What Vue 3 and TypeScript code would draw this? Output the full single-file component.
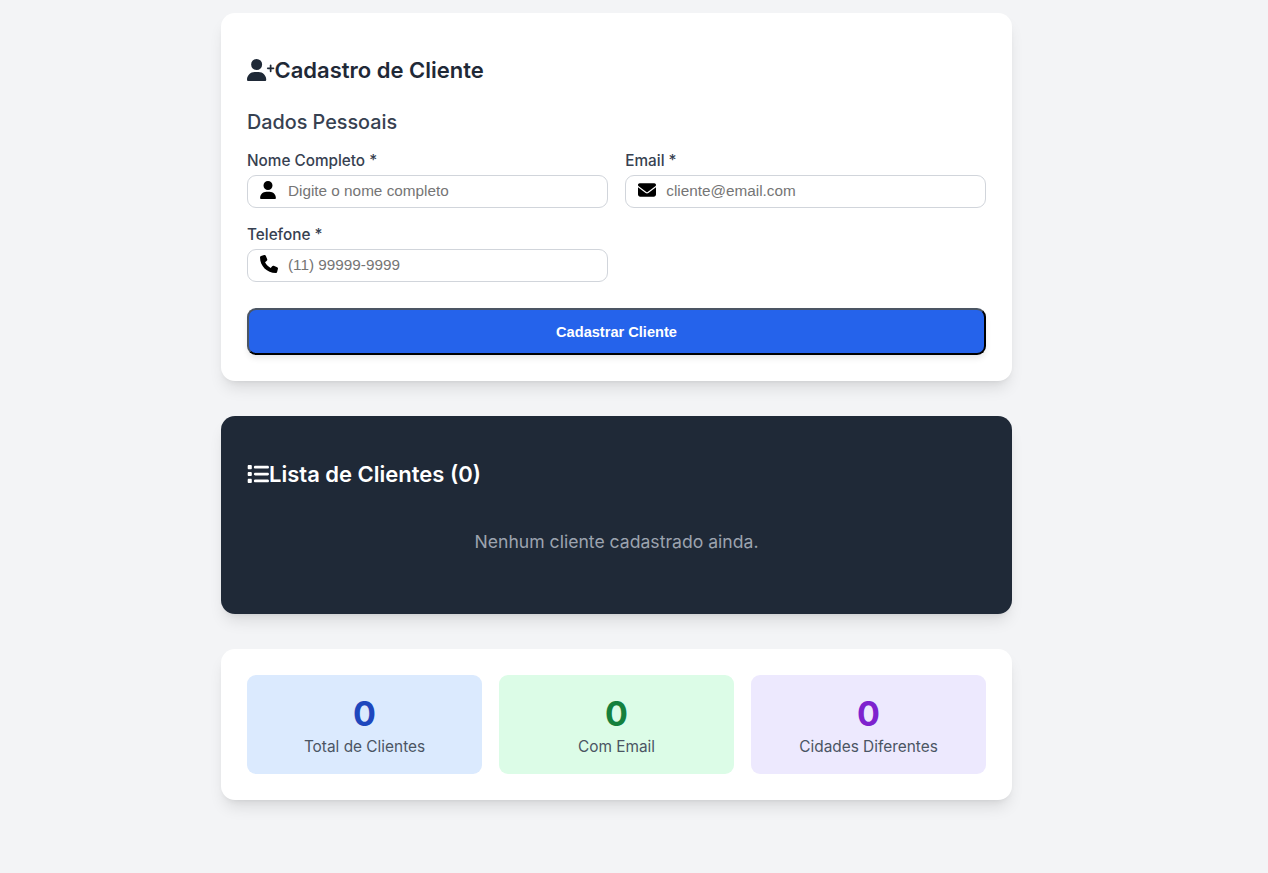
<script setup lang="ts">
const stats = [
  { value: 0, label: 'Total de Clientes', kind: 'blue' },
  { value: 0, label: 'Com Email', kind: 'green' },
  { value: 0, label: 'Cidades Diferentes', kind: 'purple' },
]
</script>

<template>
  <div class="page">
    <main class="container">
      <section class="card">
        <h1 class="title">
          <svg class="title-icon" viewBox="0 0 640 512" fill="#1f2937">
            <path d="M96 128a128 128 0 1 1 256 0A128 128 0 1 1 96 128zM0 482.3C0 383.8 79.8 304 178.3 304h91.4C368.2 304 448 383.8 448 482.3c0 16.4-13.3 29.7-29.7 29.7H29.7C13.3 512 0 498.7 0 482.3zM530 288V236H482c-11 0-20-9-20-20s9-20 20-20h48V148c0-11 9-20 20-20s20 9 20 20v48h48c11 0 20 9 20 20s-9 20-20 20H570v52c0 11-9 20-20 20s-20-9-20-20z" />
          </svg>
          Cadastro de Cliente
        </h1>
        <h2 class="subtitle">Dados Pessoais</h2>
        <form class="fields" @submit.prevent>
          <div class="field">
            <label for="nome">Nome Completo *</label>
            <div class="input-wrap">
              <svg class="input-icon user" viewBox="0 0 448 512">
                <path d="M224 256A128 128 0 1 0 224 0a128 128 0 1 0 0 256zm-45.7 48C79.8 304 0 383.8 0 482.3C0 498.7 13.3 512 29.7 512H418.3c16.4 0 29.7-13.3 29.7-29.7C448 383.8 368.2 304 269.7 304H178.3z" />
              </svg>
              <input id="nome" type="text" placeholder="Digite o nome completo" />
            </div>
          </div>
          <div class="field">
            <label for="email">Email *</label>
            <div class="input-wrap">
              <svg class="input-icon" viewBox="0 0 512 512">
                <path d="M48 64C21.5 64 0 85.5 0 112c0 15.1 7.1 29.3 19.2 38.4L236.8 313.6c11.4 8.5 27 8.5 38.4 0L492.8 150.4c12.1-9.1 19.2-23.3 19.2-38.4c0-26.5-21.5-48-48-48H48zM0 176V384c0 35.3 28.7 64 64 64H448c35.3 0 64-28.7 64-64V176L294.4 339.2c-22.8 17.1-54 17.1-76.8 0L0 176z" />
              </svg>
              <input id="email" type="email" placeholder="cliente@email.com" />
            </div>
          </div>
          <div class="field">
            <label for="telefone">Telefone *</label>
            <div class="input-wrap">
              <svg class="input-icon" viewBox="0 0 512 512">
                <path d="M164.9 24.6c-7.7-18.6-28-28.5-47.4-23.2l-88 24C12.1 30.2 0 46 0 64C0 311.4 200.6 512 448 512c18 0 33.8-12.1 38.6-29.5l24-88c5.3-19.4-4.6-39.7-23.2-47.4l-96-40c-16.3-6.8-35.2-2.1-46.3 11.6L304.7 368C234.3 334.7 177.3 277.7 144 207.3L193.3 167c13.7-11.2 18.4-30 11.6-46.3l-40-96z" />
              </svg>
              <input id="telefone" type="tel" placeholder="(11) 99999-9999" />
            </div>
          </div>
          <button class="submit" type="submit">Cadastrar Cliente</button>
        </form>
      </section>

      <section class="card dark">
        <h2 class="title light">
          <svg class="list-icon" viewBox="0 0 512 512" fill="#fff">
            <path d="M40 48C26.7 48 16 58.7 16 72v48c0 13.3 10.7 24 24 24H88c13.3 0 24-10.7 24-24V72c0-13.3-10.7-24-24-24H40zM192 64c-17.7 0-32 14.3-32 32s14.3 32 32 32H480c17.7 0 32-14.3 32-32s-14.3-32-32-32H192zm0 160c-17.7 0-32 14.3-32 32s14.3 32 32 32H480c17.7 0 32-14.3 32-32s-14.3-32-32-32H192zm0 160c-17.7 0-32 14.3-32 32s14.3 32 32 32H480c17.7 0 32-14.3 32-32s-14.3-32-32-32H192zM16 232v48c0 13.3 10.7 24 24 24H88c13.3 0 24-10.7 24-24V232c0-13.3-10.7-24-24-24H40c-13.3 0-24 10.7-24 24zM40 368c-13.3 0-24 10.7-24 24v48c0 13.3 10.7 24 24 24H88c13.3 0 24-10.7 24-24V392c0-13.3-10.7-24-24-24H40z" />
          </svg>
          Lista de Clientes (0)
        </h2>
        <p class="empty">Nenhum cliente cadastrado ainda.</p>
      </section>

      <section class="card stats">
        <div v-for="stat in stats" :key="stat.label" class="stat" :class="stat.kind">
          <div class="stat-value">{{ stat.value }}</div>
          <div class="stat-label">{{ stat.label }}</div>
        </div>
      </section>
    </main>
  </div>
</template>

<style>
html,
body {
  margin: 0;
  background: #f3f4f6;
}
</style>

<style scoped>
.page {
  min-height: 873px;
  box-sizing: border-box;
  padding: 13px 35px 0 0;
  font-family: Inter, "Liberation Sans", sans-serif;
}
.container {
  width: 791px;
  margin: 0 auto;
  display: flex;
  flex-direction: column;
  gap: 35px;
}
.card {
  background: #fff;
  border-radius: 14px;
  padding: 26px;
  box-shadow: 0 10px 15px -3px rgba(0, 0, 0, 0.1), 0 4px 6px -4px rgba(0, 0, 0, 0.1);
}
.dark {
  background: #1f2937;
  padding-bottom: 59px;
  padding-top: 27px;
}
.title {
  display: flex;
  align-items: center;
  margin: 18px 0 0;
  font-size: 22px;
  line-height: 26px;
  font-weight: 600;
  color: #1f2937;
}
.title-icon {
  width: 27.5px;
  height: 22px;
}
.light {
  color: #fff;
  margin-bottom: 0;
}
.list-icon {
  width: 22px;
  height: 22px;
}
.subtitle {
  margin: 26px 0 0;
  font-size: 19.8px;
  line-height: 26px;
  font-weight: 500;
  color: #374151;
}
.fields {
  margin-top: 17px;
  display: grid;
  grid-template-columns: 1fr 1fr;
  column-gap: 17.6px;
  row-gap: 18px;
}
.field {
  display: flex;
  flex-direction: column;
}
label {
  font-size: 15.3px;
  line-height: 17px;
  font-weight: 500;
  color: #374151;
  margin-bottom: 6px;
}
.input-wrap {
  position: relative;
}
.input-icon {
  position: absolute;
  left: 12.7px;
  top: 6px;
  width: 18px;
  height: 18px;
}
.input-icon.user {
  left: 11.7px;
}
input {
  display: block;
  width: 100%;
  height: 33px;
  box-sizing: border-box;
  padding: 0 12px 2px 40px;
  border: 1px solid #d1d5db;
  border-radius: 9px;
  background: #fff;
  font-family: "Liberation Sans", Arial, sans-serif;
  font-size: 15.3px;
  color: #111827;
  outline: none;
}
input::placeholder {
  color: #757575;
}
.submit {
  grid-column: 1 / -1;
  margin-top: 8px;
  height: 47px;
  border: 2px solid;
  border-color: #4b5563 #000 #000 #4b5563;
  border-radius: 9px;
  background: #2563eb;
  color: #fff;
  font-family: "Liberation Sans", Arial, sans-serif;
  font-size: 14.6px;
  font-weight: 700;
  box-shadow: 0 4px 6px -1px rgba(0, 0, 0, 0.1);
}
.empty {
  margin: 42px 0 0;
  text-align: center;
  font-size: 17.6px;
  line-height: 26px;
  color: #9ca3af;
}
.stats {
  display: grid;
  grid-template-columns: repeat(3, 1fr);
  gap: 17px;
}
.stat {
  height: 99px;
  box-sizing: border-box;
  padding-top: 17px;
  border-radius: 9px;
  text-align: center;
}
.stat-value {
  font-size: 34px;
  line-height: 43px;
  font-weight: 700;
}
.stat-label {
  font-size: 15.4px;
  line-height: 24px;
  color: #4b5563;
}
.blue {
  background: #dbeafe;
}
.blue .stat-value {
  color: #1e47bd;
}
.green {
  background: #dcfce7;
}
.green .stat-value {
  color: #15803d;
}
.purple {
  background: #ede9fe;
}
.purple .stat-value {
  color: #7e22ce;
}
</style>
